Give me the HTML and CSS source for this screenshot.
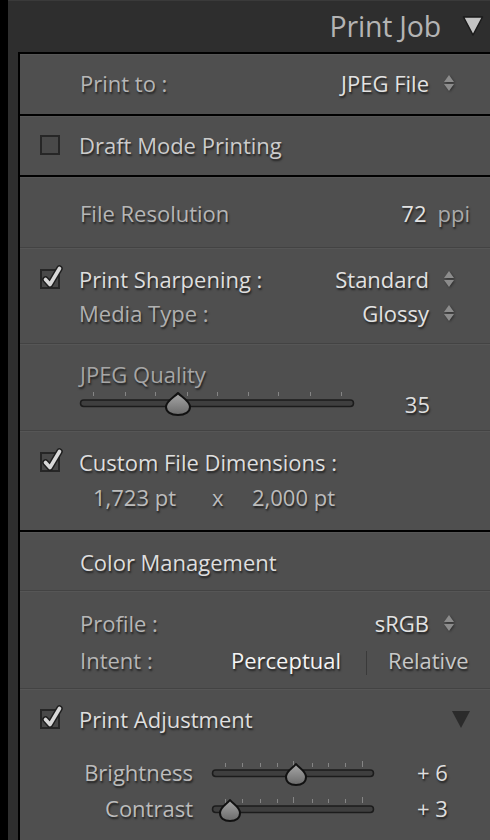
FILE: index.html
```html
<!DOCTYPE html>
<html>
<head>
<meta charset="utf-8">
<link rel="stylesheet" href="styles.css">
</head>
<body>
<div class="app">
  <div class="header">
    <span class="title">Print Job</span>
    <svg class="hdr-tri" width="22" height="22" viewBox="0 0 22 22"><path d="M1.5,2 L20.5,2 L11,20 Z" fill="#c4c4c4" stroke="#1a1a1a" stroke-width="1.5" stroke-linejoin="round"/></svg>
  </div>
  <div class="panel">
    <section class="sec s1 black">
      <div class="row">
        <span class="lbl">Print to :</span>
        <span class="val">JPEG File</span>
        <svg class="ud" width="10" height="16" viewBox="0 0 10 16"><path d="M5,0 L10,7 L0,7 Z M0,9 L10,9 L5,16 Z" fill="#8c8c8c"/></svg>
      </div>
    </section>
    <section class="sec s2 black">
      <div class="row">
        <svg class="cb" width="20" height="20" viewBox="0 0 20 20"><rect x="1" y="1" width="18" height="18" fill="#494949" stroke="#262626" stroke-width="2"/></svg>
        <span class="cbtext c-mid">Draft Mode Printing</span>
      </div>
    </section>
    <section class="sec s3 thin">
      <div class="row">
        <span class="lbl">File Resolution</span>
        <span class="val">72</span>
        <span class="unit">ppi</span>
      </div>
    </section>
    <section class="sec s4 thin">
      <div class="row r35">
        <svg class="cb" width="20" height="20" viewBox="0 0 20 20"><rect x="1" y="1" width="18" height="18" fill="#494949" stroke="#262626" stroke-width="2"/><path d="M5.5,10.5 L10,15.5 L19.5,-0.5" fill="none" stroke="#1e1e1e" stroke-width="6.5" stroke-linecap="round" stroke-linejoin="round"/><path d="M5.5,10.5 L10,15.5 L19.5,-0.5" fill="none" stroke="#d8d8d8" stroke-width="3.6" stroke-linecap="round" stroke-linejoin="round"/></svg>
        <span class="cbtext c-hi">Print Sharpening :</span>
        <span class="val">Standard</span>
        <svg class="ud" width="10" height="16" viewBox="0 0 10 16"><path d="M5,0 L10,7 L0,7 Z M0,9 L10,9 L5,16 Z" fill="#8c8c8c"/></svg>
      </div>
      <div class="row">
        <span class="lbl2">Media Type :</span>
        <span class="val">Glossy</span>
        <svg class="ud" width="10" height="16" viewBox="0 0 10 16"><path d="M5,0 L10,7 L0,7 Z M0,9 L10,9 L5,16 Z" fill="#8c8c8c"/></svg>
      </div>
    </section>
    <section class="sec s5 thin">
      <div class="row">
        <span class="lbl dim">JPEG Quality</span>
      </div>
      <div class="row slrow">
        <svg class="slider" width="280" height="26" viewBox="0 0 280 26">
          <defs><linearGradient id="tg" x1="0" y1="0" x2="0" y2="1"><stop offset="0" stop-color="#a8a8a8"/><stop offset="1" stop-color="#6a6a6a"/></linearGradient></defs>
          <g fill="#858585"><rect x="15" y="1" width="1" height="4"/><rect x="47" y="1" width="1" height="4"/><rect x="77" y="1" width="1" height="4"/><rect x="109" y="1" width="1" height="4"/><rect x="139" y="1" width="1" height="4"/><rect x="170" y="1" width="1" height="4"/><rect x="200" y="1" width="1" height="4"/><rect x="232" y="1" width="1" height="4"/><rect x="263" y="1" width="1" height="4"/></g>
          <rect x="2.5" y="9" width="273" height="6.5" rx="3.2" fill="#3f3f3f" stroke="#1c1c1c" stroke-width="1.5"/>
          <path transform="translate(100,14)" d="M0,-12 C3.5,-8 12,-4 12,2 C12,7 7,10 0,10 C-7,10 -12,7 -12,2 C-12,-4 -3.5,-8 0,-12 Z" fill="url(#tg)" stroke="#111" stroke-width="2" stroke-linejoin="round"/>
        </svg>
        <span class="num">35</span>
      </div>
    </section>
    <section class="sec s6 black">
      <div class="row r36">
        <svg class="cb" width="20" height="20" viewBox="0 0 20 20"><rect x="1" y="1" width="18" height="18" fill="#494949" stroke="#262626" stroke-width="2"/><path d="M5.5,10.5 L10,15.5 L19.5,-0.5" fill="none" stroke="#1e1e1e" stroke-width="6.5" stroke-linecap="round" stroke-linejoin="round"/><path d="M5.5,10.5 L10,15.5 L19.5,-0.5" fill="none" stroke="#d8d8d8" stroke-width="3.6" stroke-linecap="round" stroke-linejoin="round"/></svg>
        <span class="cbtext c-hi">Custom File Dimensions :</span>
      </div>
      <div class="row dims">
        <span class="d1">1,723 pt</span>
        <span class="dx">x</span>
        <span class="d2">2,000 pt</span>
      </div>
    </section>
    <section class="sec s7 thin">
      <div class="row">
        <span class="lbl c-hi">Color Management</span>
      </div>
    </section>
    <section class="sec s8 thin">
      <div class="row r37">
        <span class="lbl">Profile :</span>
        <span class="val">sRGB</span>
        <svg class="ud" width="10" height="16" viewBox="0 0 10 16"><path d="M5,0 L10,7 L0,7 Z M0,9 L10,9 L5,16 Z" fill="#8c8c8c"/></svg>
      </div>
      <div class="row r37">
        <span class="lbl intent">Intent :</span>
        <span class="opt on">Perceptual</span>
        <span class="vsep"></span>
        <span class="opt">Relative</span>
      </div>
    </section>
    <section class="sec s9 thin">
      <div class="row">
        <svg class="cb" width="20" height="20" viewBox="0 0 20 20"><rect x="1" y="1" width="18" height="18" fill="#494949" stroke="#262626" stroke-width="2"/><path d="M5.5,10.5 L10,15.5 L19.5,-0.5" fill="none" stroke="#1e1e1e" stroke-width="6.5" stroke-linecap="round" stroke-linejoin="round"/><path d="M5.5,10.5 L10,15.5 L19.5,-0.5" fill="none" stroke="#d8d8d8" stroke-width="3.6" stroke-linecap="round" stroke-linejoin="round"/></svg>
        <span class="cbtext c-hi">Print Adjustment</span>
        <svg class="adj-tri" width="18" height="17" viewBox="0 0 18 17"><path d="M0,0 L18,0 L9,17 Z" fill="#2b2b2b"/></svg>
      </div>
      <div class="adj">
        <div class="row slrow2">
          <span class="slbl">Brightness</span>
          <svg class="slider2" width="170" height="30" viewBox="0 0 170 30">
            <defs><linearGradient id="tg2" x1="0" y1="0" x2="0" y2="1"><stop offset="0" stop-color="#a8a8a8"/><stop offset="1" stop-color="#6a6a6a"/></linearGradient></defs>
            <g fill="#858585"><rect x="15" y="6" width="1" height="4"/><rect x="32" y="6" width="1" height="4"/><rect x="50" y="6" width="1" height="4"/><rect x="67" y="6" width="1" height="4"/><rect x="83" y="4" width="1" height="6"/><rect x="102" y="6" width="1" height="4"/><rect x="118" y="6" width="1" height="4"/><rect x="135" y="6" width="1" height="4"/><rect x="152" y="4" width="1" height="6"/></g>
            <rect x="2.5" y="13" width="161" height="6.5" rx="3.2" fill="#3f3f3f" stroke="#1c1c1c" stroke-width="1.5"/>
            <path transform="translate(86,18)" d="M0,-11 C3,-7 10,-4 10,2 C10,7 6,10 0,10 C-6,10 -10,7 -10,2 C-10,-4 -3,-7 0,-11 Z" fill="url(#tg2)" stroke="#111" stroke-width="2" stroke-linejoin="round"/>
          </svg>
          <span class="num2">+ 6</span>
        </div>
        <div class="row slrow2">
          <span class="slbl">Contrast</span>
          <svg class="slider2" width="170" height="30" viewBox="0 0 170 30">
            <g fill="#858585"><rect x="15" y="6" width="1" height="4"/><rect x="32" y="6" width="1" height="4"/><rect x="50" y="6" width="1" height="4"/><rect x="67" y="6" width="1" height="4"/><rect x="83" y="4" width="1" height="6"/><rect x="102" y="6" width="1" height="4"/><rect x="118" y="6" width="1" height="4"/><rect x="135" y="6" width="1" height="4"/><rect x="152" y="4" width="1" height="6"/></g>
            <rect x="2.5" y="13" width="161" height="6.5" rx="3.2" fill="#3f3f3f" stroke="#1c1c1c" stroke-width="1.5"/>
            <path transform="translate(20,18)" d="M0,-11 C3,-7 10,-4 10,2 C10,7 6,10 0,10 C-6,10 -10,7 -10,2 C-10,-4 -3,-7 0,-11 Z" fill="url(#tg2)" stroke="#111" stroke-width="2" stroke-linejoin="round"/>
          </svg>
          <span class="num2">+ 3</span>
        </div>
      </div>
    </section>
  </div>
</div>
</body>
</html>
```
FILE: styles.css
```css
* { box-sizing: border-box; }
html, body { margin: 0; padding: 0; }
body {
  background: #000;
  width: 490px;
  height: 840px;
  overflow: hidden;
  font-family: "Open Sans", "Noto Sans", sans-serif;
  font-size: 22px;
  color: #b6b6b6;
}
.app {
  margin-left: 8px;
  background: #2e2e2e;
  min-height: 840px;
  border-top: 1px solid #3a3a3a;
}
.header {
  height: 51px;
  display: flex;
  align-items: center;
  justify-content: flex-end;
  padding-right: 6px;
}
.title {
  font-size: 28.5px;
  color: #b4b4b4;
  letter-spacing: -0.2px;
  margin-right: 21px;
  margin-top: -1px;
}
.hdr-tri { margin-top: -2px; }
.panel {
  margin-left: 10px;
  border-left: 2px solid #000;
  border-top: 2px solid #000;
  background: #4f4f4f;
  min-height: 800px;
}
.sec {
  padding: 0 20px 0 20px;
  border-top: 1px solid #565656;
}
.sec.black { border-bottom: 2px solid #000; }
.sec.thin { border-bottom: 1px solid #434343; }
.row {
  display: flex;
  align-items: center;
  height: 34px;
  text-shadow: 1px 2px 2px rgba(0,0,0,0.6);
  white-space: nowrap;
}
.r35 { height: 35px; }
.r36 { height: 36px; }
.r37 { height: 37px; }
.s1 { height: 62px; padding-top: 11px; }
.s2 { height: 61px; padding-top: 11px; }
.s3 { height: 71px; padding-top: 18px; }
.s4 { height: 96px; padding-top: 12px; }
.s5 { height: 87px; padding-top: 12px; }
.s6 { height: 101px; padding-top: 12px; }
.s7 { height: 59px; padding-top: 12px; }
.s8 { height: 98px; padding-top: 12px; }
.s9 { height: 160px; padding-top: 12px; }

.lbl { margin-left: 40px; color: #b6b6b6; }
.lbl2 { margin-left: 39px; color: #b0b0b0; }
.dim { color: #a6a6a6; }
.c-hi { color: #dedede; }
.c-mid { color: #cccccc; }
.cb { flex: none; overflow: visible; }
.cbtext { margin-left: 19px; }
.val { margin-left: auto; color: #e2e2e2; }
.ud { flex: none; margin-left: 15px; margin-right: 16px; filter: drop-shadow(1px 1px 1px rgba(0,0,0,0.4)); }
.unit { margin-left: 11px; color: #aaaaaa; }

.slrow { height: 26px; }
.slider { margin-left: 38px; flex: none; }
.num { margin-left: auto; margin-right: 40px; color: #dedede; }

.dims { margin-left: 53px; color: #bcbcbc; }
.d1 { width: 119px; }
.dx { width: 40px; }

.intent { width: 151px; flex: none; }
.opt { color: #c8c8c8; }
.opt.on { color: #f4f4f4; }
.vsep {
  width: 1px;
  height: 24px;
  background: #3a3a3a;
  margin: 6px 21px 0 25px;
}
.adj-tri { margin-left: auto; flex: none; }
.adj { margin-top: 18px; }
.slrow2 { height: 36px; }
.slbl { width: 153px; flex: none; text-align: right; color: #bcbcbc; }
.slider2 { margin-left: 17px; flex: none; }
.num2 { margin-left: 37px; color: #dedede; }
```
